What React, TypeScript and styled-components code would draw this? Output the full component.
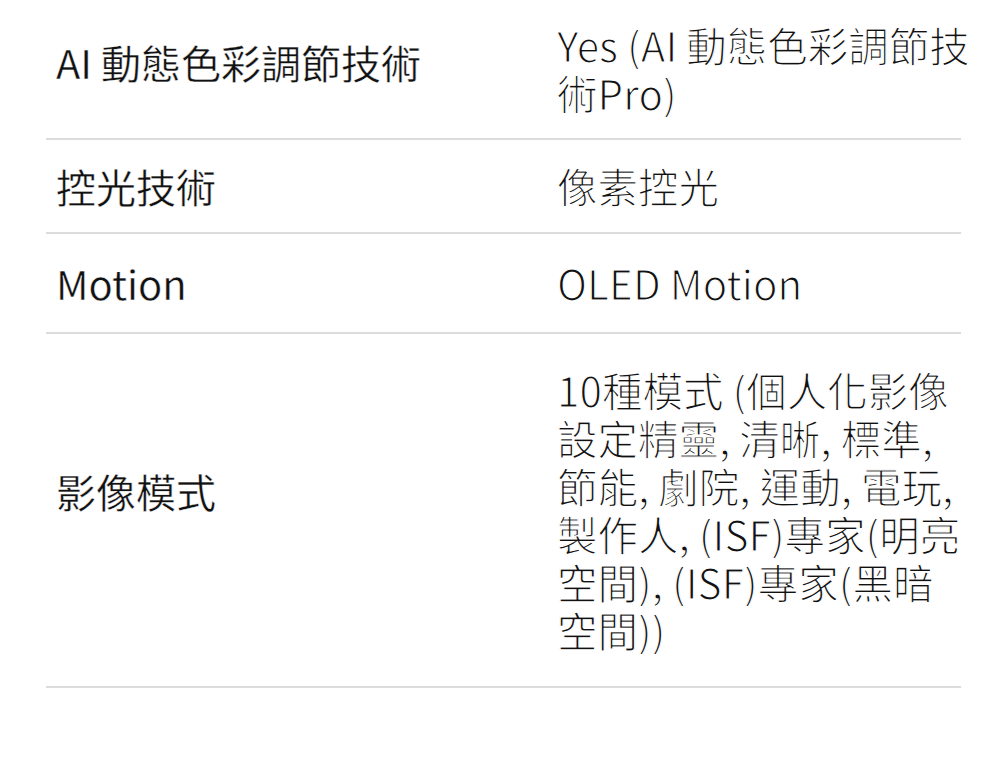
import React from "react";
import styled, { createGlobalStyle } from "styled-components";

const Global = createGlobalStyle`
  html, body { margin: 0; padding: 0; background: #ffffff; }
  body { font-family: "Noto Sans CJK TC", "Noto Sans", sans-serif; color: #111111; }
`;

const Table = styled.dl`
  margin: 0 0 0 46px;
  width: 915px;
`;

const Row = styled.div<{ $pt: number; $pb: number }>`
  display: grid;
  grid-template-columns: 511px 1fr;
  align-items: center;
  padding: ${(p) => p.$pt}px 0 ${(p) => p.$pb}px;
  border-bottom: 2px solid #dcdcdc;
`;

const Label = styled.dt<{ $lift?: number }>`
  margin: 0 0 ${(p) => p.$lift ?? 0}px;
  padding-left: 10px;
  font-size: 40px;
  line-height: 48px;
  font-weight: 400;
  color: #111111;
  -webkit-text-stroke: 0.4px #ffffff;
`;

const Value = styled.dd<{ $w: number }>`
  margin: 0;
  width: ${(p) => p.$w}px;
  font-size: 40.5px;
  line-height: 48px;
  font-weight: 400;
  color: #111111;
  -webkit-text-stroke: 1.2px #ffffff;
`;

const rows = [
  { label: "AI 動態色彩調節技術", value: "Yes (AI 動態色彩調節技術Pro)", pt: 21, pb: 21, lift: 15, w: 420 },
  { label: "控光技術", value: "像素控光", pt: 22, pb: 22, lift: 0, w: 404 },
  { label: "Motion", value: "OLED Motion", pt: 25, pb: 25, lift: 0, w: 404 },
  {
    label: "影像模式",
    value:
      "10種模式 (個人化影像設定精靈, 清晰, 標準, 節能, 劇院, 運動, 電玩, 製作人, (ISF)專家(明亮空間), (ISF)專家(黑暗空間))",
    pt: 32,
    pb: 32,
    lift: 38,
    w: 404,
  },
];

export default function App() {
  return (
    <>
      <Global />
      <Table>
        {rows.map((r) => (
          <Row key={r.label} $pt={r.pt} $pb={r.pb}>
            <Label $lift={r.lift}>{r.label}</Label>
            <Value $w={r.w}>{r.value}</Value>
          </Row>
        ))}
      </Table>
    </>
  );
}
